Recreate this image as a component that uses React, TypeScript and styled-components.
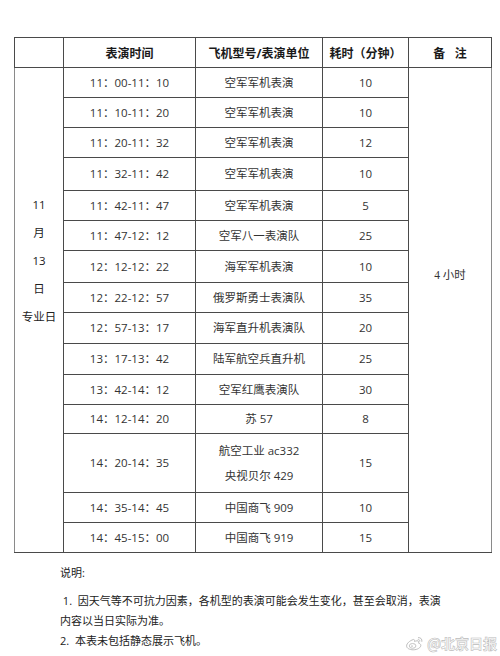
import React from "react";
import styled, { createGlobalStyle } from "styled-components";

const sans = `"Open Sans", "Noto Sans CJK SC", sans-serif`;

const GlobalStyle = createGlobalStyle`
  html, body {
    margin: 0;
    padding: 0;
    background: #ffffff;
  }
  body {
    font-family: ${sans};
    color: #333;
  }
`;

// start of styled-components

const Page = styled.div`
  position: relative;
  width: 500px;
  height: 656px;
  padding-top: 37px;
  box-sizing: border-box;
  overflow: hidden;
`;

const Schedule = styled.table`
  margin-left: 14px;
  width: 477px;
  border-collapse: collapse;
  table-layout: fixed;
  border: 1.5px solid #8a8a8a;
  font-size: 11.5px;
`;

const Row = styled.tr<{ $h: number }>`
  height: ${(p) => p.$h}px;
`;

const HeadCell = styled.th`
  border: 1px solid #4a4a4a;
  font-weight: 700;
  font-size: 12px;
  color: #1a1a1a;
  text-align: center;
  vertical-align: middle;
  padding: 0;
  white-space: pre;
`;

const Cell = styled.td`
  border: 1px solid #4a4a4a;
  text-align: center;
  vertical-align: middle;
  padding: 0;
  color: #333;
  line-height: 25px;
  white-space: nowrap;
`;

const DateCell = styled.td`
  border: 1px solid #4a4a4a;
  border-left: none;
  text-align: center;
  vertical-align: top;
  padding: 123px 0 0;
  font-size: 11.5px;
  line-height: 28px;
  color: #222;
`;

const RemarkCell = styled.td`
  border: 1px solid #4a4a4a;
  border-right: none;
  text-align: center;
  vertical-align: top;
  padding: 198px 0 0;
  font-family: "Liberation Serif", "Noto Sans CJK SC", serif;
  font-size: 11.5px;
  color: #333;
`;

const Notes = styled.div`
  margin: 10px 0 0 60px;
  font-size: 11px;
  line-height: 20px;
  color: #222;
`;

const NotesTitle = styled.div`
  margin-bottom: 8px;
`;

const NoteLine = styled.div`
  white-space: pre;
`;

const Watermark = styled.div`
  position: absolute;
  right: 3px;
  bottom: 3px;
  display: flex;
  align-items: center;
  gap: 2px;
  font-family: "Noto Sans CJK SC", sans-serif;
  font-size: 14px;
  font-weight: 700;
  color: #ffffff;
  -webkit-text-stroke: 0.6px #b4b4b4;
  opacity: 0.9;
`;

// end of styled-components

type Slot = {
  time: string;
  unit: string[];
  minutes: string;
  h: number;
};

const slots: Slot[] = [
  { time: "11：00-11：10", unit: ["空军军机表演"], minutes: "10", h: 30 },
  { time: "11：10-11：20", unit: ["空军军机表演"], minutes: "10", h: 30 },
  { time: "11：20-11：32", unit: ["空军军机表演"], minutes: "12", h: 29.7 },
  { time: "11：32-11：42", unit: ["空军军机表演"], minutes: "10", h: 32.6 },
  { time: "11：42-11：47", unit: ["空军军机表演"], minutes: "5", h: 30 },
  { time: "11：47-12：12", unit: ["空军八一表演队"], minutes: "25", h: 30.7 },
  { time: "12：12-12：22", unit: ["海军军机表演"], minutes: "10", h: 31.7 },
  { time: "12：22-12：57", unit: ["俄罗斯勇士表演队"], minutes: "35", h: 30 },
  { time: "12：57-13：17", unit: ["海军直升机表演队"], minutes: "20", h: 31 },
  { time: "13：17-13：42", unit: ["陆军航空兵直升机"], minutes: "25", h: 30.6 },
  { time: "13：42-14：12", unit: ["空军红鹰表演队"], minutes: "30", h: 30 },
  { time: "14：12-14：20", unit: ["苏 57"], minutes: "8", h: 29 },
  {
    time: "14：20-14：35",
    unit: ["航空工业 ac332", "央视贝尔 429"],
    minutes: "15",
    h: 59.4,
  },
  { time: "14：35-14：45", unit: ["中国商飞 909"], minutes: "10", h: 30 },
  { time: "14：45-15：00", unit: ["中国商飞 919"], minutes: "15", h: 30 },
];

function WeiboMark() {
  return (
    <svg width="20" height="16" viewBox="0 0 20 16" fill="none">
      <path
        d="M8.2 4.6c-3.4 1-6.6 3.9-6.6 6.3 0 2.5 3.2 3.9 6.6 3.9 4.2 0 7.6-2.2 7.6-4.4 0-1.5-1.4-2-2.3-2.3 0.5-1.2 0.4-2.6-1.6-2.3-1 0.1-2 0.6-2.4 0.7 0.3-1.4-0.4-2.5-1.3-1.9z"
        stroke="#b8b8b8"
        strokeWidth="1"
      />
      <ellipse cx="7.6" cy="10.9" rx="3.3" ry="2.4" stroke="#b8b8b8" strokeWidth="0.9" />
      <circle cx="7" cy="11.1" r="0.9" fill="#c4c4c4" />
      <path d="M13.4 2.6c2.2-0.3 4 1.6 3.5 3.8" stroke="#b8b8b8" strokeWidth="1" strokeLinecap="round" />
      <path d="M13.2 4.4c1-0.1 1.9 0.8 1.6 1.8" stroke="#b8b8b8" strokeWidth="0.9" strokeLinecap="round" />
    </svg>
  );
}

function App() {
  return (
    <>
      <GlobalStyle />
      <Page>
        <Schedule>
          <colgroup>
            <col style={{ width: 49 }} />
            <col style={{ width: 132 }} />
            <col style={{ width: 127 }} />
            <col style={{ width: 86 }} />
            <col style={{ width: 83 }} />
          </colgroup>
          <tbody>
            <Row $h={30.3}>
              <HeadCell />
              <HeadCell>表演时间</HeadCell>
              <HeadCell>飞机型号/表演单位</HeadCell>
              <HeadCell>耗时（分钟）</HeadCell>
              <HeadCell>备   注</HeadCell>
            </Row>
            {slots.map((slot, i) => (
              <Row $h={slot.h} key={slot.time}>
                {i === 0 && (
                  <DateCell rowSpan={slots.length}>
                    11
                    <br />月
                    <br />
                    13
                    <br />日
                    <br />
                    专业日
                  </DateCell>
                )}
                <Cell>{slot.time}</Cell>
                <Cell>
                  {slot.unit.map((line) => (
                    <div key={line}>{line}</div>
                  ))}
                </Cell>
                <Cell>{slot.minutes}</Cell>
                {i === 0 && <RemarkCell rowSpan={slots.length}>4 小时</RemarkCell>}
              </Row>
            ))}
          </tbody>
        </Schedule>
        <Notes>
          <NotesTitle>说明:</NotesTitle>
          <NoteLine>
            {" 1.  因天气等不可抗力因素，各机型的表演可能会发生变化，甚至会取消，表演"}
          </NoteLine>
          <NoteLine>内容以当日实际为准。</NoteLine>
          <NoteLine>{"2.  本表未包括静态展示飞机。"}</NoteLine>
        </Notes>
        <Watermark>
          <WeiboMark />
          @北京日报
        </Watermark>
      </Page>
    </>
  );
}

export default App;
